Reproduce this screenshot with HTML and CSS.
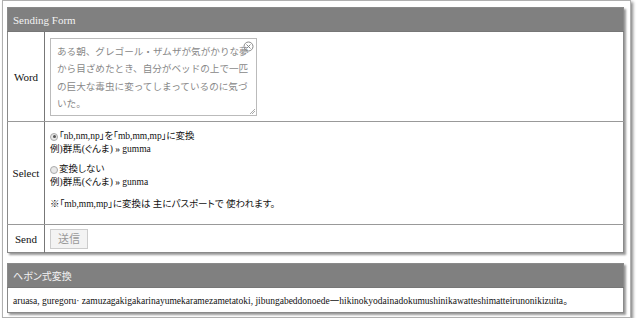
FILE: index.html
```html
<!DOCTYPE html>
<html lang="ja">
<head>
<meta charset="utf-8">
<title>Sending Form</title>
<link rel="stylesheet" href="styles.css">
</head>
<body>
<div class="wrap">
  <table class="panel form">
    <tr><th class="head" colspan="2">Sending Form</th></tr>
    <tr class="row-word">
      <td class="label">Word</td>
      <td class="field">
        <div class="ta">
          <div class="ta-text">ある朝、グレゴール・ザムザが気がかりな夢から目ざめたとき、自分がベッドの上で一匹の巨大な毒虫に変ってしまっているのに気づいた。</div>
          <svg class="clear" width="11" height="11" viewBox="0 0 11 11"><circle cx="5.5" cy="5.5" r="4.5" fill="none" stroke="#888" stroke-width="1"/><path d="M3.5 3.5 L7.5 7.5 M7.5 3.5 L3.5 7.5" stroke="#888" stroke-width="1"/></svg>
          <span class="grip"></span>
        </div>
      </td>
    </tr>
    <tr class="row-select">
      <td class="label">Select</td>
      <td class="field sel">
        <div class="opt"><span class="radio on"></span>「nb,nm,np」を「mb,mm,mp」に変換</div>
        <div class="ex">例)群馬(ぐんま) » gumma</div>
        <div class="opt gap"><span class="radio"></span>変換しない</div>
        <div class="ex">例)群馬(ぐんま) » gunma</div>
        <div class="note">※「mb,mm,mp」に変換は 主にパスポートで 使われます。</div>
      </td>
    </tr>
    <tr class="row-send">
      <td class="label">Send</td>
      <td class="field"><span class="btn">送信</span></td>
    </tr>
  </table>
  <table class="panel result">
    <tr><th class="head jp">ヘボン式変換</th></tr>
    <tr><td class="out">aruasa, guregoru· zamuzagakigakarinayumekaramezametatoki, jibungabeddonoede一hikinokyodainadokumushinikawatteshimatteirunonikizuita。</td></tr>
  </table>
</div>
</body>
</html>
```

FILE: styles.css
```css
html, body {
  margin: 0;
  padding: 0;
  background: #fff;
}
body {
  font-family: "Liberation Serif", "Noto Sans CJK JP", serif;
  font-size: 11px;
  color: #111;
  font-feature-settings: "palt";
}
.wrap {
  margin-left: 2px;
  width: 618px;
  border: 1px solid #b0b0b0;
  box-shadow: 2px 2px 3px #888;
  padding: 6px 5px 5px 4px;
  height: 305px;
}
.panel {
  width: 617px;
  border-collapse: collapse;
  border: 1px solid #8a8a8a;
  box-shadow: 2px 2px 2px #999;
  background: #fff;
}
.head {
  background: #808080;
  color: #f2f2f2;
  font-weight: normal;
  text-align: left;
  font-size: 11px;
  height: 23px;
  padding: 0 0 0 5px;
  border-bottom: 1px solid #777;
}
.head.jp { font-size: 10px; }
.form .label {
  width: 36px;
  text-align: center;
  font-weight: normal;
  border-right: 1px solid #777;
  border-bottom: 1px solid #999;
  padding: 0;
}
.form .field {
  border-bottom: 1px solid #999;
  padding: 0 0 0 5px;
  vertical-align: middle;
}
.row-word td { height: 89px; }
.row-select td { height: 102px; }
.form .field.sel {
  vertical-align: top;
  padding-top: 8px;
  height: 94px;
}
.form .row-send td { height: 27px; border-bottom: none; }
.ta {
  position: relative;
  width: 205px;
  height: 76px;
  border: 1px solid #bbb;
  box-sizing: content-box;
}
.ta-text {
  padding: 4px 6px 0 6px;
  font-family: "Noto Sans CJK JP", sans-serif;
  font-feature-settings: normal;
  font-size: 9.6px;
  line-height: 17.5px;
  color: #888;
  word-break: break-all;
}
.clear {
  position: absolute;
  right: 2px;
  top: 2px;
  display: block;
}
.grip {
  position: absolute;
  right: 1px;
  bottom: 1px;
  width: 5px;
  height: 5px;
  background: linear-gradient(135deg, transparent 45%, #aaa 45%, #aaa 55%, transparent 55%, transparent 70%, #aaa 70%, #aaa 80%, transparent 80%);
}
.opt, .ex, .note {
  font-size: 9.5px;
  line-height: 13px;
  height: 13px;
  overflow: visible;
  display: flex;
  align-items: center;
  white-space: nowrap;
}
.opt.gap { margin-top: 7px; }
.note { margin-top: 9px; }
.radio {
  width: 6px;
  height: 6px;
  border: 1px solid #aaa;
  border-radius: 50%;
  background: #e8e8e8;
  margin-right: 1px;
  position: relative;
}
.radio.on::after {
  content: "";
  position: absolute;
  left: 1.5px;
  top: 1.5px;
  width: 3px;
  height: 3px;
  border-radius: 50%;
  background: #555;
}
.btn {
  display: inline-block;
  width: 36px;
  height: 18px;
  line-height: 18px;
  text-align: center;
  border: 1px solid #ccc;
  background: #f3f3f3;
  color: #999;
  font-size: 11px;
  vertical-align: middle;
}
.result {
  margin-top: 10px;
}
.out {
  height: 24px;
  padding: 0 0 0 5px;
  font-size: 9.5px;
  white-space: nowrap;
}
```
